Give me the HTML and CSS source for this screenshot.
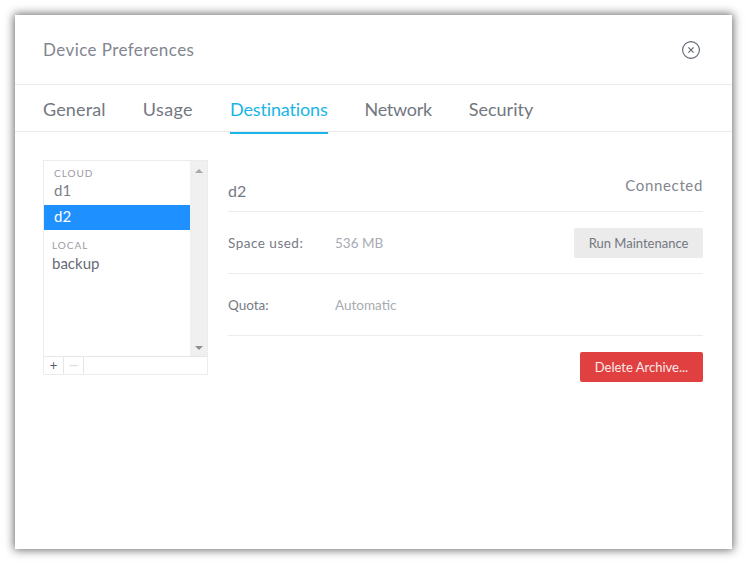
FILE: index.html
```html
<!DOCTYPE html>
<html lang="en">
<head>
<meta charset="utf-8">
<title>Device Preferences</title>
<link rel="stylesheet" href="styles.css">
</head>
<body>
<div class="window">
  <header class="head">
    <h1 class="title">Device Preferences</h1>
    <svg class="close" width="18" height="18" viewBox="0 0 18 18" fill="none" stroke="#5d6270">
      <circle cx="9" cy="9" r="8.4" stroke-width="1.1"/>
      <path d="M6.4 6.4l5.2 5.2M11.6 6.4l-5.2 5.2" stroke-width="1.1"/>
    </svg>
  </header>
  <nav class="tabs">
    <span class="tab t-general">General</span>
    <span class="tab t-usage">Usage</span>
    <span class="tab t-dest active">Destinations</span>
    <span class="tab t-network">Network</span>
    <span class="tab">Security</span>
  </nav>
  <main class="content">
    <section class="listbox">
      <div class="listmain">
        <div class="items">
          <div class="group cloud">CLOUD</div>
          <div class="item">d1</div>
          <div class="item selected">d2</div>
          <div class="group local">LOCAL</div>
          <div class="item plain">backup</div>
        </div>
        <div class="scrollbar">
          <span class="arrow up"></span>
          <span class="arrow down"></span>
        </div>
      </div>
      <div class="listfoot">
        <span class="fbtn">+</span>
        <span class="fbtn off">−</span>
      </div>
    </section>
    <section class="detail">
      <div class="row top">
        <span class="name">d2</span>
        <span class="status">Connected</span>
      </div>
      <div class="row">
        <span class="label">Space used:</span>
        <span class="value">536 MB</span>
        <button class="btn grey">Run Maintenance</button>
      </div>
      <div class="row">
        <span class="label">Quota:</span>
        <span class="value">Automatic</span>
      </div>
      <div class="actions">
        <button class="btn red">Delete Archive...</button>
      </div>
    </section>
  </main>
</div>
</body>
</html>
```

FILE: styles.css
```css
* { box-sizing: border-box; }
html, body { margin: 0; height: 100%; }
body {
  width: 747px;
  height: 564px;
  padding: 15px;
  background: #fff;
  overflow: hidden;
  font-family: Lato, "Liberation Sans", sans-serif;
  color: #6b6f7a;
}
.window {
  width: 717px;
  height: 534px;
  background: #fff;
  box-shadow: 0 0 9px 1px rgba(0,0,0,.6);
}
.head {
  height: 70px;
  padding: 0 32px 0 28px;
  display: flex;
  align-items: center;
  justify-content: space-between;
  border-bottom: 1px solid #e9e9ec;
}
.title { margin: 0; font-size: 17px; font-weight: 400; color: #82868f; letter-spacing: .42px; }
.tabs {
  height: 47px;
  padding: 0 28px;
  display: flex;
  gap: 37px;
  border-bottom: 1px solid #e9e9ec;
}
.tab {
  font-size: 18px;
  line-height: 48px;
  height: 49px;
  color: #73777f;
}
.t-general { letter-spacing: .15px; }
.t-usage { letter-spacing: .4px; }
.t-dest { letter-spacing: -.15px; }
.t-network { letter-spacing: -.3px; }
.tab.active { color: #1ab4e6; border-bottom: 2px solid #1ab4e6; }
.content {
  padding: 28px 29px 0 28px;
  display: flex;
  gap: 20px;
  align-items: flex-start;
}
.listbox {
  width: 165px;
  height: 215px;
  border: 1px solid #ececec;
  display: flex;
  flex-direction: column;
}
.listmain { height: 197px; display: flex; border-bottom: 1px solid #e6e6e6; }
.items { flex: 1; min-width: 0; }
.group { font-size: 10px; letter-spacing: 1px; color: #9a9ca3; line-height: 12px; }
.cloud { padding: 6px 0 0 10px; }
.local { padding: 9px 0 0 8px; }
.item { height: 25px; line-height: 22px; padding-left: 10px; font-size: 15px; color: #7b7f87; }
.item.selected { margin-top: 1px; background: #1e90ff; color: #fff; }
.item.plain { padding-left: 8px; line-height: 24px; color: #666a75; }
.scrollbar {
  width: 17px;
  background: #f0f0f0;
  display: flex;
  flex-direction: column;
  justify-content: space-between;
  align-items: center;
  padding: 8px 0 6px;
}
.arrow { width: 0; height: 0; border-left: 4px solid transparent; border-right: 4px solid transparent; }
.arrow.up { border-bottom: 4px solid #a8a8a8; }
.arrow.down { border-top: 4px solid #8f8f8f; }
.listfoot { flex: 1; display: flex; }
.fbtn {
  width: 20px;
  border-right: 1px solid #e6e6e6;
  text-align: center;
  font-size: 13px;
  line-height: 17px;
  color: #555a66;
}
.fbtn.off { color: #dcdcdc; font-size: 18px; line-height: 15px; }
.detail { flex: 1; min-width: 0; }
.row {
  height: 62px;
  display: flex;
  align-items: center;
  border-bottom: 1px solid #ececee;
}
.row.top {
  height: 52px;
  justify-content: space-between;
  align-items: flex-start;
  padding-top: 16px;
}
.name { font-size: 16px; color: #767a84; padding-top: 5px; }
.status { font-size: 15px; color: #82868f; letter-spacing: .65px; }
.label { width: 107px; font-size: 13.5px; color: #767a84; }
.row:nth-child(2) .label { letter-spacing: .5px; }
.value { font-size: 13.5px; color: #a8abb2; }
.btn {
  border: 0;
  border-radius: 2px;
  height: 30px;
  font: inherit;
  font-size: 13px;
  padding: 0;
}
.grey { margin-left: auto; width: 129px; background: #ebebeb; color: #73777f; }
.actions { display: flex; justify-content: flex-end; padding-top: 16px; }
.red { width: 123px; background: #e04040; color: #fbeaea; }
```
